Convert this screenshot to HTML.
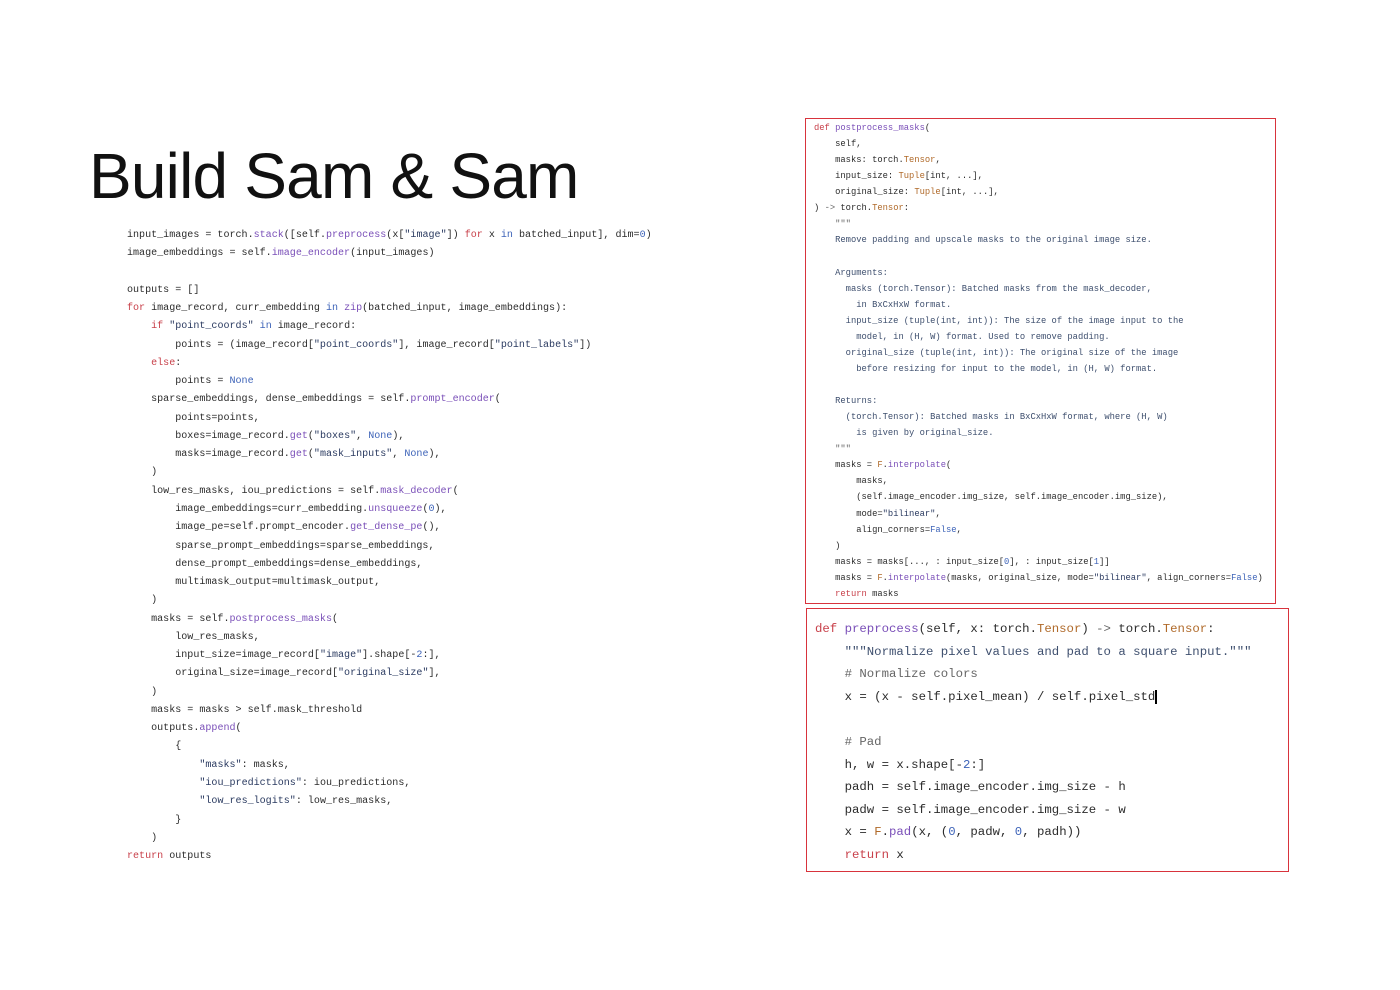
<!DOCTYPE html>
<html><head><meta charset="utf-8"><style>
body{margin:0;width:1400px;height:990px;background:#fff;position:relative;overflow:hidden}
pre{margin:0;position:absolute;font-family:"Liberation Mono",monospace;color:#2b2b2b}
.k{color:#c8404a}.f{color:#7a4fb8}.b{color:#3d63b8}.t{color:#b06a2a}.d{color:#3e4f6e}.c{color:#666}.s{color:#2a3a60}
#title{position:absolute;left:89px;top:139px;font-family:"Liberation Sans",sans-serif;font-size:64px;color:#111;letter-spacing:-0.8px;white-space:nowrap}
.box{position:absolute;border:1.5px solid #d8333c}
</style></head><body>
<div id="title">Build Sam &amp; Sam</div>
<pre style="left:127px;top:227px;font-size:10.05px;line-height:18.26px">input_images = torch.<span class="f">stack</span>([self.<span class="f">preprocess</span>(x[<span class="s">"image"</span>]) <span class="k">for</span> x <span class="b">in</span> batched_input], dim=<span class="b">0</span>)
image_embeddings = self.<span class="f">image_encoder</span>(input_images)

outputs = []
<span class="k">for</span> image_record, curr_embedding <span class="b">in</span> <span class="f">zip</span>(batched_input, image_embeddings):
    <span class="k">if</span> <span class="s">"point_coords"</span> <span class="b">in</span> image_record:
        points = (image_record[<span class="s">"point_coords"</span>], image_record[<span class="s">"point_labels"</span>])
    <span class="k">else</span>:
        points = <span class="b">None</span>
    sparse_embeddings, dense_embeddings = self.<span class="f">prompt_encoder</span>(
        points=points,
        boxes=image_record.<span class="f">get</span>(<span class="s">"boxes"</span>, <span class="b">None</span>),
        masks=image_record.<span class="f">get</span>(<span class="s">"mask_inputs"</span>, <span class="b">None</span>),
    )
    low_res_masks, iou_predictions = self.<span class="f">mask_decoder</span>(
        image_embeddings=curr_embedding.<span class="f">unsqueeze</span>(<span class="b">0</span>),
        image_pe=self.prompt_encoder.<span class="f">get_dense_pe</span>(),
        sparse_prompt_embeddings=sparse_embeddings,
        dense_prompt_embeddings=dense_embeddings,
        multimask_output=multimask_output,
    )
    masks = self.<span class="f">postprocess_masks</span>(
        low_res_masks,
        input_size=image_record[<span class="s">"image"</span>].shape[-<span class="b">2</span>:],
        original_size=image_record[<span class="s">"original_size"</span>],
    )
    masks = masks &gt; self.mask_threshold
    outputs.<span class="f">append</span>(
        {
            <span class="s">"masks"</span>: masks,
            <span class="s">"iou_predictions"</span>: iou_predictions,
            <span class="s">"low_res_logits"</span>: low_res_masks,
        }
    )
<span class="k">return</span> outputs</pre>

<div class="box" style="left:805px;top:118px;width:469px;height:484px"></div>
<pre style="left:814px;top:120px;font-size:8.8px;line-height:16.07px"><span class="k">def</span> <span class="f">postprocess_masks</span>(
    self,
    masks: torch.<span class="t">Tensor</span>,
    input_size: <span class="t">Tuple</span>[int, ...],
    original_size: <span class="t">Tuple</span>[int, ...],
) <span class="c">-&gt;</span> torch.<span class="t">Tensor</span>:
    <span class="c">"""</span>
<span class="d">    Remove padding and upscale masks to the original image size.

    Arguments:
      masks (torch.Tensor): Batched masks from the mask_decoder,
        in BxCxHxW format.
      input_size (tuple(int, int)): The size of the image input to the
        model, in (H, W) format. Used to remove padding.
      original_size (tuple(int, int)): The original size of the image
        before resizing for input to the model, in (H, W) format.

    Returns:
      (torch.Tensor): Batched masks in BxCxHxW format, where (H, W)
        is given by original_size.</span>
    <span class="c">"""</span>
    masks = <span class="t">F</span>.<span class="f">interpolate</span>(
        masks,
        (self.image_encoder.img_size, self.image_encoder.img_size),
        mode=<span class="s">"bilinear"</span>,
        align_corners=<span class="b">False</span>,
    )
    masks = masks[..., : input_size[<span class="b">0</span>], : input_size[<span class="b">1</span>]]
    masks = <span class="t">F</span>.<span class="f">interpolate</span>(masks, original_size, mode=<span class="s">"bilinear"</span>, align_corners=<span class="b">False</span>)
    <span class="k">return</span> masks</pre>

<div class="box" style="left:806px;top:608px;width:481px;height:262px"></div>
<pre style="left:815px;top:618px;font-size:12.33px;line-height:22.6px"><span class="k">def</span> <span class="f">preprocess</span>(self, x: torch.<span class="t">Tensor</span>) <span class="c">-&gt;</span> torch.<span class="t">Tensor</span>:
    <span class="d">"""Normalize pixel values and pad to a square input."""</span>
    <span class="c"># Normalize colors</span>
    x = (x - self.pixel_mean) / self.pixel_std<span style="border-left:2px solid #000;margin-left:0"></span>

    <span class="c"># Pad</span>
    h, w = x.shape[-<span class="b">2</span>:]
    padh = self.image_encoder.img_size - h
    padw = self.image_encoder.img_size - w
    x = <span class="t">F</span>.<span class="f">pad</span>(x, (<span class="b">0</span>, padw, <span class="b">0</span>, padh))
    <span class="k">return</span> x</pre>
</body></html>
